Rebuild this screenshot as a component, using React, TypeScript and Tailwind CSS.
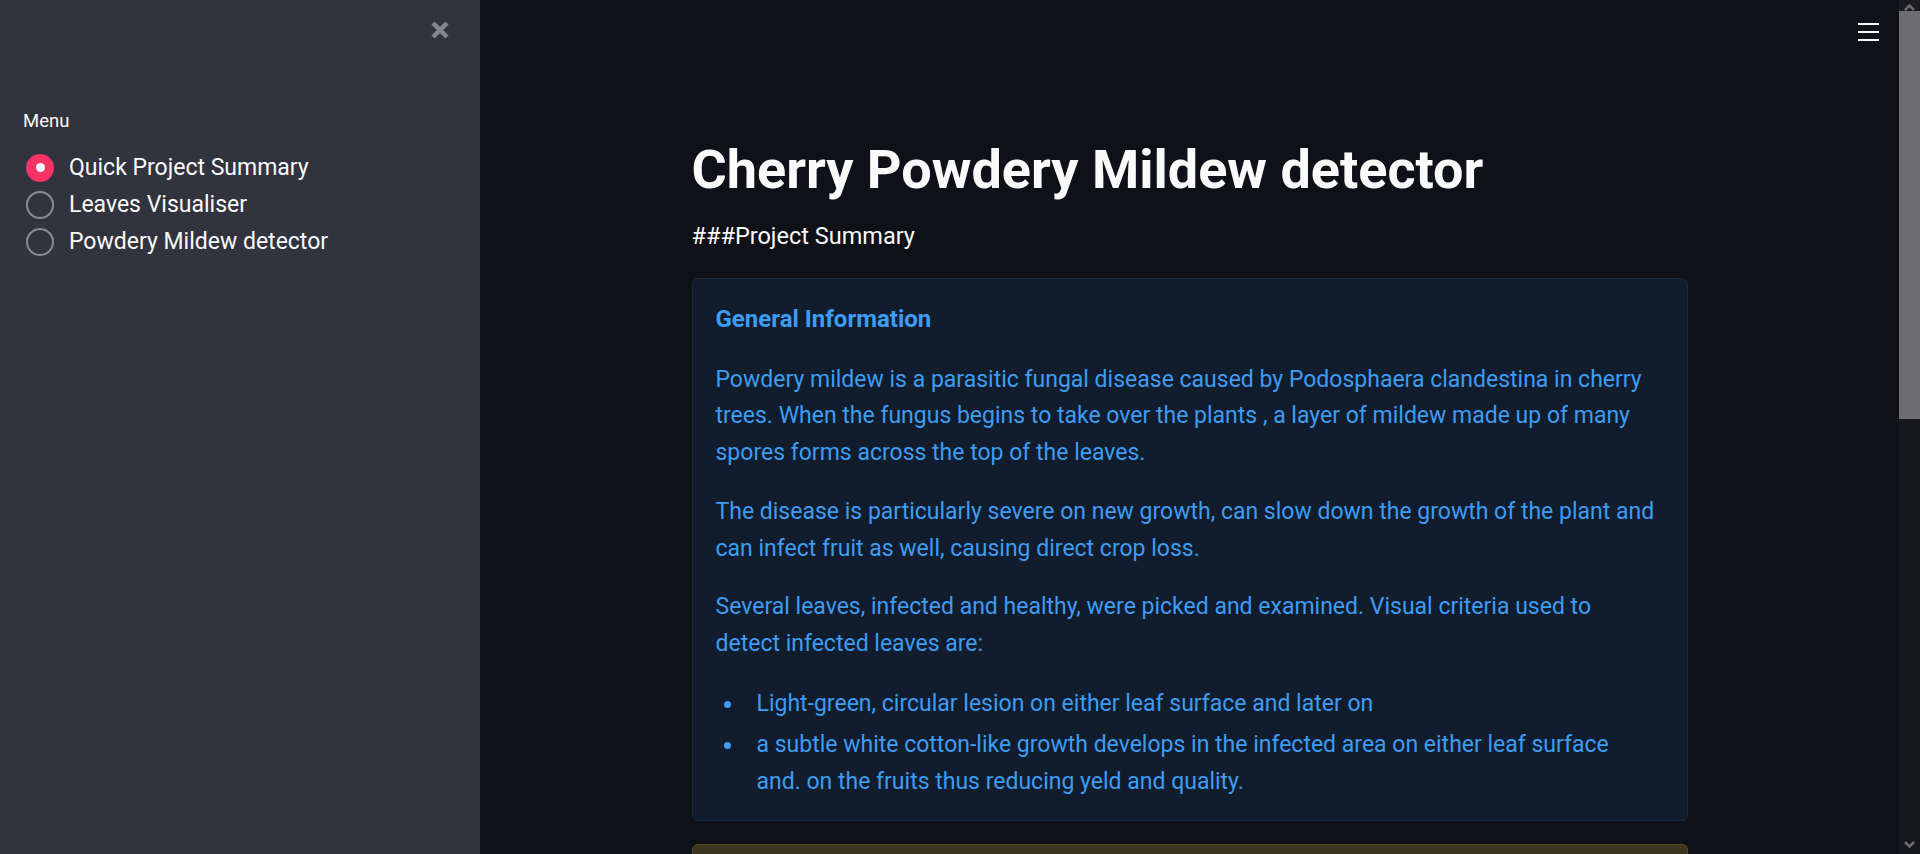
const pages = ['Quick Project Summary', 'Leaves Visualiser', 'Powdery Mildew detector'];

function Radio({ label, checked }: { label: string; checked: boolean }) {
  return (
    <div className="flex h-[37px] items-center gap-[15px] pl-[26px]">
      {checked ? (
        <div className="flex h-[28px] w-[28px] items-center justify-center rounded-full bg-[#f63366]">
          <div className="h-[9px] w-[9px] rounded-full bg-[#fafafa]" />
        </div>
      ) : (
        <div className="h-[28px] w-[28px] rounded-full border-[2.5px] border-[#8a8c94]" />
      )}
      <span className="text-[23px] leading-[28px] text-[#fafafa]">{label}</span>
    </div>
  );
}

function Bullet({ children }: { children: React.ReactNode }) {
  return (
    <li className="flex gap-[26px] pl-[8px]">
      <span className="mt-[15px] h-[7px] w-[7px] shrink-0 rounded-full bg-[#3d9df3]" />
      <span>{children}</span>
    </li>
  );
}

export default function App() {
  return (
    <div className="flex h-screen w-full overflow-hidden bg-[#0e1117] font-['Roboto',sans-serif]">
      {/* Sidebar */}
      <aside className="w-[480px] shrink-0 bg-[#31333f]">
        <div className="flex justify-end pr-[29px] pt-[19px]">
          <svg width="22" height="22" viewBox="0 0 22 22" className="text-[#83858f]">
            <path d="M4 4 L18 18 M18 4 L4 18" stroke="currentColor" strokeWidth="4.5" />
          </svg>
        </div>
        <p className="mt-[66px] pl-[23px] text-[18.5px] leading-[28px] text-[#fafafa]">Menu</p>
        <div className="mt-[14px] flex flex-col">
          {pages.map((p, i) => (
            <Radio key={p} label={p} checked={i === 0} />
          ))}
        </div>
      </aside>

      {/* Main */}
      <main className="relative flex-1 overflow-hidden">
        <button className="absolute right-[20px] top-[23px] flex flex-col gap-[6px]">
          <span className="h-[2px] w-[21px] bg-[#fafafa]" />
          <span className="h-[2px] w-[21px] bg-[#fafafa]" />
          <span className="h-[2px] w-[21px] bg-[#fafafa]" />
        </button>

        <div className="mx-auto w-[996px] pt-[134px]">
          <h1 className="text-[54px] font-bold leading-[72px] text-[#fafafa]">Cherry Powdery Mildew detector</h1>
          <p className="mt-[12px] text-[23.5px] leading-[36px] text-[#fafafa]">###Project Summary</p>

          <div className="mt-[24px] rounded-[6px] border border-[#172a40] bg-[#111c2d] px-[23px] pb-[19px] pt-[22px] text-[23px] leading-[36.7px] text-[#3d9df3]">
            <p className="text-[24px] font-bold">General Information</p>
            <p className="mt-[24px]">
              Powdery mildew is a parasitic fungal disease caused by Podosphaera clandestina in cherry
              <br />
              trees. When the fungus begins to take over the plants , a layer of mildew made up of many
              <br />
              spores forms across the top of the leaves.
            </p>
            <p className="mt-[22px]">
              The disease is particularly severe on new growth, can slow down the growth of the plant and
              <br />
              can infect fruit as well, causing direct crop loss.
            </p>
            <p className="mt-[22px]">
              Several leaves, infected and healthy, were picked and examined. Visual criteria used to
              <br />
              detect infected leaves are:
            </p>
            <ul className="mt-[23px] flex flex-col gap-[5px]">
              <Bullet>Light-green, circular lesion on either leaf surface and later on</Bullet>
              <Bullet>
                a subtle white cotton-like growth develops in the infected area on either leaf surface
                <br />
                and. on the fruits thus reducing yeld and quality.
              </Bullet>
            </ul>
          </div>

          <div className="mt-[23px] h-[200px] rounded-[6px] border border-[#5a4a22] bg-[#3c3520]" />
        </div>
      </main>

      {/* Scrollbar */}
      <div className="flex w-[21px] shrink-0 flex-col bg-[#17181b]">
        <div className="flex h-[11px] items-end justify-center bg-[#1b1c1f]">
          <svg width="11" height="7" viewBox="0 0 11 7" className="text-[#6e6e71]">
            <path d="M1 6 L5.5 1.5 L10 6" stroke="currentColor" strokeWidth="2.5" fill="none" />
          </svg>
        </div>
        <div className="h-[408px] bg-[#6e6e71]" />
        <div className="flex-1" />
        <div className="flex h-[13px] items-start justify-center">
          <svg width="11" height="7" viewBox="0 0 11 7" className="text-[#6e6e71]">
            <path d="M1 1 L5.5 5.5 L10 1" stroke="currentColor" strokeWidth="2.5" fill="none" />
          </svg>
        </div>
      </div>
    </div>
  );
}
